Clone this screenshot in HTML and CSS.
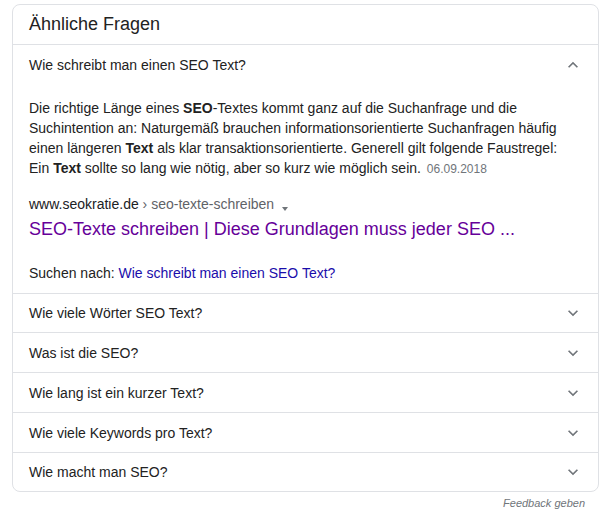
FILE: index.html
```html
<!DOCTYPE html>
<html lang="de">
<head>
    <meta charset="UTF-8">
    <title>Ähnliche Fragen</title>
    <link rel="stylesheet" href="styles.css">
</head>
<body>
    <div class="related">
        <div class="related-title">Ähnliche Fragen</div>

        <div class="question open">
            <span>Wie schreibt man einen SEO Text?</span>
            <svg class="chevron" viewBox="0 0 24 24" width="20" height="20"><path d="M7.41 15.41 12 10.83l4.59 4.58L18 14l-6-6-6 6z"/></svg>
        </div>
        <div class="answer">
            <p class="snippet">Die richtige Länge eines <b>SEO</b>-Textes kommt ganz auf die Suchanfrage und die Suchintention an: Naturgemäß brauchen informationsorientierte Suchanfragen häufig einen längeren <b>Text</b> als klar transaktionsorientierte. Generell gilt folgende Faustregel: Ein <b>Text</b> sollte so lang wie nötig, aber so kurz wie möglich sein. <span class="date">06.09.2018</span></p>
            <div class="source">
                <span class="domain">www.seokratie.de</span> <span class="path">› seo-texte-schreiben</span>
                <span class="caret"></span>
            </div>
            <a class="result-link" href="#">SEO-Texte schreiben | Diese Grundlagen muss jeder SEO ...</a>
            <div class="search-for">Suchen nach: <a href="#">Wie schreibt man einen SEO Text?</a></div>
        </div>

        <div class="question after-answer">
            <span>Wie viele Wörter SEO Text?</span>
            <svg class="chevron" viewBox="0 0 24 24" width="20" height="20"><path d="M7.41 8.59 12 13.17l4.59-4.58L18 10l-6 6-6-6z"/></svg>
        </div>
        <div class="question">
            <span>Was ist die SEO?</span>
            <svg class="chevron" viewBox="0 0 24 24" width="20" height="20"><path d="M7.41 8.59 12 13.17l4.59-4.58L18 10l-6 6-6-6z"/></svg>
        </div>
        <div class="question">
            <span>Wie lang ist ein kurzer Text?</span>
            <svg class="chevron" viewBox="0 0 24 24" width="20" height="20"><path d="M7.41 8.59 12 13.17l4.59-4.58L18 10l-6 6-6-6z"/></svg>
        </div>
        <div class="question">
            <span>Wie viele Keywords pro Text?</span>
            <svg class="chevron" viewBox="0 0 24 24" width="20" height="20"><path d="M7.41 8.59 12 13.17l4.59-4.58L18 10l-6 6-6-6z"/></svg>
        </div>
        <div class="question last">
            <span>Wie macht man SEO?</span>
            <svg class="chevron" viewBox="0 0 24 24" width="20" height="20"><path d="M7.41 8.59 12 13.17l4.59-4.58L18 10l-6 6-6-6z"/></svg>
        </div>
    </div>
    <div class="feedback">Feedback geben</div>
</body>
</html>
```

FILE: styles.css
```css
body {
    margin: 0;
    padding: 4px 9px 0 12px;
    font-family: "Liberation Sans", Arial, sans-serif;
    font-size: 14px;
    color: #222;
    background: #fff;
}

.related {
    border: 1px solid #dfe1e5;
    border-radius: 8px;
    overflow: hidden;
}

.related-title {
    height: 39px;
    padding: 0 16px;
    display: flex;
    align-items: center;
    font-size: 18px;
    color: #222;
    border-bottom: 1px solid #dfe1e5;
}

.question {
    height: 39px;
    padding: 0 16px;
    display: flex;
    align-items: center;
    justify-content: space-between;
    font-size: 14px;
    color: #222;
    border-bottom: 1px solid #dfe1e5;
}

.question.after-answer {
    height: 38px;
}

.question.last {
    border-bottom: none;
    height: 38px;
}

.question.open {
    border-bottom: none;
    height: 40px;
}

.chevron {
    fill: #70757a;
    margin-right: -1px;
}

.answer {
    padding: 13px 16px 10px;
    border-bottom: 1px solid #dfe1e5;
}

.snippet {
    margin: 0;
    max-width: 545px;
    line-height: 20px;
}

.snippet b {
    color: #222;
}

.date {
    font-size: 12px;
    color: #70757a;
    margin-left: 2px;
}

.source {
    margin-top: 15px;
    line-height: 20px;
    font-size: 14px;
}

.domain {
    color: #202124;
}

.path {
    color: #5f6368;
}

.caret {
    display: inline-block;
    margin-left: 4px;
    border-left: 3px solid transparent;
    border-right: 3px solid transparent;
    border-top: 4px solid #70757a;
    vertical-align: -2px;
}

.result-link {
    display: block;
    font-size: 18px;
    line-height: 24px;
    margin-top: 3px;
    color: #660099;
    text-decoration: none;
}

.search-for {
    margin-top: 22px;
    line-height: 20px;
}

.search-for a {
    color: #1a0dab;
    text-decoration: none;
}

.feedback {
    text-align: right;
    padding: 5px 14px 0 0;
    font-size: 11px;
    font-style: italic;
    color: #70757a;
}
```
